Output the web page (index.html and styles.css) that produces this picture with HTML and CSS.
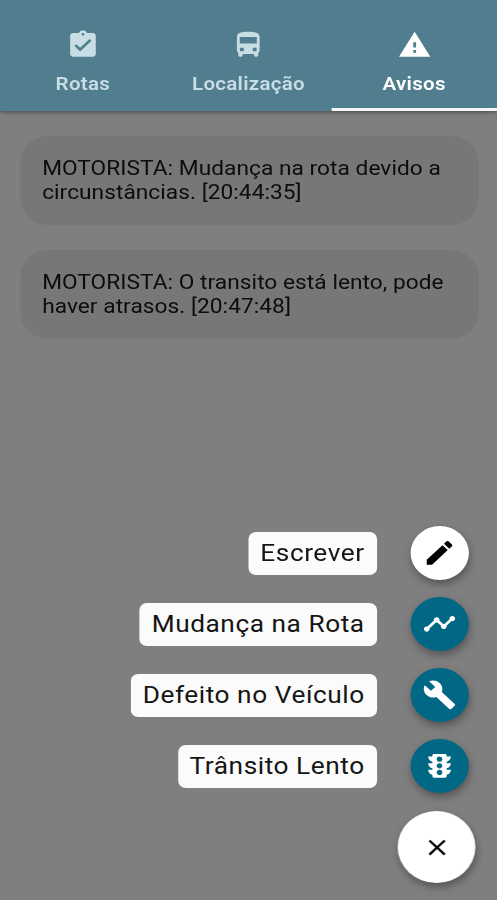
FILE: index.html
```html
<!DOCTYPE html>
<html lang="pt-BR">
  <head>
    <meta charset="UTF-8" />
    <meta name="viewport" content="width=device-width, initial-scale=1.0" />
    <title>Avisos</title>
    <link rel="stylesheet" href="styles.css">
  </head>
  <body>
    <div class="app">
      <nav class="tabs">
        <a class="tab">
          <svg class="icon" viewBox="0 0 24 24"><path d="M19 3h-4.18C14.4 1.84 13.3 1 12 1c-1.3 0-2.4.84-2.82 2H5c-1.1 0-2 .9-2 2v14c0 1.1.9 2 2 2h14c1.1 0 2-.9 2-2V5c0-1.1-.9-2-2-2zm-7 0c.55 0 1 .45 1 1s-.45 1-1 1-1-.45-1-1 .45-1 1-1zm-2 14l-4-4 1.41-1.41L10 14.17l6.59-6.59L18 9l-8 8z"/></svg>
          <span>Rotas</span>
        </a>
        <a class="tab">
          <svg class="icon" viewBox="0 0 24 24"><path d="M4 16c0 .88.39 1.67 1 2.22V20c0 .55.45 1 1 1h1c.55 0 1-.45 1-1v-1h8v1c0 .55.45 1 1 1h1c.55 0 1-.45 1-1v-1.78c.61-.55 1-1.34 1-2.22V6c0-3.5-3.58-4-8-4s-8 .5-8 4v10zm3.5 1c-.83 0-1.5-.67-1.5-1.5S6.67 14 7.5 14s1.5.67 1.5 1.5S8.33 17 7.5 17zm9 0c-.83 0-1.5-.67-1.5-1.5s.67-1.5 1.5-1.5 1.5.67 1.5 1.5-.67 1.5-1.5 1.5zm1.5-6H6V6h12v5z"/></svg>
          <span>Localização</span>
        </a>
        <a class="tab active">
          <svg class="icon" viewBox="0 0 24 24"><path d="M1 21h22L12 2 1 21zm12-3h-2v-2h2v2zm0-4h-2v-4h2v4z"/></svg>
          <span>Avisos</span>
        </a>
      </nav>

      <main class="messages">
        <p class="message">MOTORISTA: Mudança na rota devido a circunstâncias. [20:44:35]</p>
        <p class="message">MOTORISTA: O transito está lento, pode haver atrasos. [20:47:48]</p>
      </main>

      <div class="speed-dial">
        <div class="action">
          <span class="label">Escrever</span>
          <button class="fab light"><svg class="icon" viewBox="0 0 24 24"><path d="M3 17.25V21h3.75L17.81 9.94l-3.75-3.75L3 17.25zM20.71 7.04c.39-.39.39-1.02 0-1.41l-2.34-2.34c-.39-.39-1.02-.39-1.41 0l-1.83 1.83 3.75 3.75 1.83-1.83z"/></svg></button>
        </div>
        <div class="action">
          <span class="label">Mudança na Rota</span>
          <button class="fab"><svg class="icon" viewBox="0 0 24 24"><path d="M23 8c0 1.1-.9 2-2 2-.18 0-.35-.02-.51-.07l-3.56 3.55c.05.16.07.34.07.52 0 1.1-.9 2-2 2s-2-.9-2-2c0-.18.02-.36.07-.52l-2.55-2.55c-.16.05-.34.07-.52.07s-.36-.02-.52-.07l-4.55 4.56c.05.16.07.33.07.51 0 1.1-.9 2-2 2s-2-.9-2-2 .9-2 2-2c.18 0 .35.02.51.07l4.56-4.55C8.02 9.36 8 9.18 8 9c0-1.1.9-2 2-2s2 .9 2 2c0 .18-.02.36-.07.52l2.55 2.55c.16-.05.34-.07.52-.07s.36.02.52.07l3.55-3.56C19.02 8.35 19 8.18 19 8c0-1.1.9-2 2-2s2 .9 2 2z"/></svg></button>
        </div>
        <div class="action">
          <span class="label">Defeito no Veículo</span>
          <button class="fab"><svg class="icon" viewBox="0 0 24 24"><path d="M22.7 19l-9.1-9.1c.9-2.3.4-5-1.5-6.9-2-2-5-2.4-7.4-1.3L9 6 6 9 1.6 4.7C.4 7.1.9 10.1 2.9 12.1c1.9 1.9 4.6 2.4 6.9 1.5l9.1 9.1c.4.4 1 .4 1.4 0l2.3-2.3c.5-.4.5-1.1.1-1.4z"/></svg></button>
        </div>
        <div class="action">
          <span class="label">Trânsito Lento</span>
          <button class="fab"><svg class="icon" viewBox="0 0 24 24"><path d="M20 10h-3V8.86c1.72-.45 3-2 3-3.86h-3V4c0-.55-.45-1-1-1H8c-.55 0-1 .45-1 1v1H4c0 1.86 1.28 3.41 3 3.86V10H4c0 1.86 1.28 3.41 3 3.86V15H4c0 1.86 1.28 3.41 3 3.86V20c0 .55.45 1 1 1h8c.55 0 1-.45 1-1v-1.14c1.72-.45 3-2 3-3.86h-3v-1.14c1.72-.45 3-2 3-3.86zm-8 9c-1.11 0-2-.9-2-2s.89-2 2-2c1.1 0 2 .9 2 2s-.89 2-2 2zm0-5c-1.11 0-2-.9-2-2s.89-2 2-2c1.1 0 2 .9 2 2s-.89 2-2 2zm0-5c-1.11 0-2-.9-2-2 0-1.11.89-2 2-2 1.1 0 2 .89 2 2 0 1.1-.89 2-2 2z"/></svg></button>
        </div>
        <button class="fab main"><svg class="icon" viewBox="0 0 24 24"><path d="M19 6.41L17.59 5 12 10.59 6.41 5 5 6.41 10.59 12 5 17.59 6.41 19 12 13.41 17.59 19 19 17.59 13.41 12z"/></svg></button>
      </div>
    </div>
  </body>
</html>
```
FILE: styles.css
```css
* {
  box-sizing: border-box;
}
body {
  margin: 0;
  background-color: #7f7f7f;
  font-family: Roboto, sans-serif;
  overflow: hidden;
}
/* 460px layout stretched to the 497px viewport */
.app {
  display: flex;
  flex-direction: column;
  width: 460px;
  height: 900px;
  transform: scaleX(1.08043);
  transform-origin: left top;
}
.icon {
  display: block;
  width: 31.6px;
  height: 31.6px;
  fill: currentColor;
}
.tabs {
  display: flex;
  flex: none;
  height: 111px;
  background-color: #517e8f;
  box-shadow: 0 1px 4px rgba(0, 0, 0, 0.45);
}
.tab {
  flex: 1;
  display: flex;
  flex-direction: column;
  align-items: center;
  padding-top: 29px;
  border-bottom: 3px solid transparent;
  color: #c9dde5;
  font-size: 19px;
  font-weight: 600;
  line-height: 22px;
  letter-spacing: 0.25px;
}
.tab .icon {
  margin-bottom: 12px;
}
.tab.active {
  color: #fff;
  border-bottom-color: #f4f7f8;
}
.messages {
  display: flex;
  flex-direction: column;
  gap: 25px;
  padding: 25px 17px 0 19px;
}
.message {
  height: 89px;
  margin: 0;
  padding: 20px;
  border-radius: 26px;
  background-color: #777;
  color: #0c0c0c;
  font-size: 21px;
  line-height: 24px;
  letter-spacing: 0.04px;
}
.speed-dial {
  display: flex;
  flex-direction: column;
  align-items: flex-end;
  gap: 17px;
  margin-top: auto;
  padding: 0 20px 17px 0;
}
.action {
  display: flex;
  align-items: center;
  gap: 31.5px;
  margin-right: 6px;
}
.label {
  height: 43px;
  padding: 0 11px;
  border-radius: 7px;
  background-color: #fbfbfb;
  color: #151515;
  font-size: 24.3px;
  line-height: 41px;
  letter-spacing: 0.5px;
  white-space: nowrap;
}
.fab {
  display: flex;
  align-items: center;
  justify-content: center;
  width: 54px;
  height: 54px;
  padding: 0;
  border: none;
  border-radius: 50%;
  background-color: #006884;
  color: #fff;
  box-shadow: 1px 4px 8px rgba(0, 0, 0, 0.35);
  cursor: pointer;
}
.fab.light,
.fab.main {
  background-color: #fff;
  color: #000;
}
.fab.main {
  width: 72px;
  height: 72px;
  margin-top: 1px;
}
.fab.main .icon {
  width: 27px;
  height: 27px;
}
```
